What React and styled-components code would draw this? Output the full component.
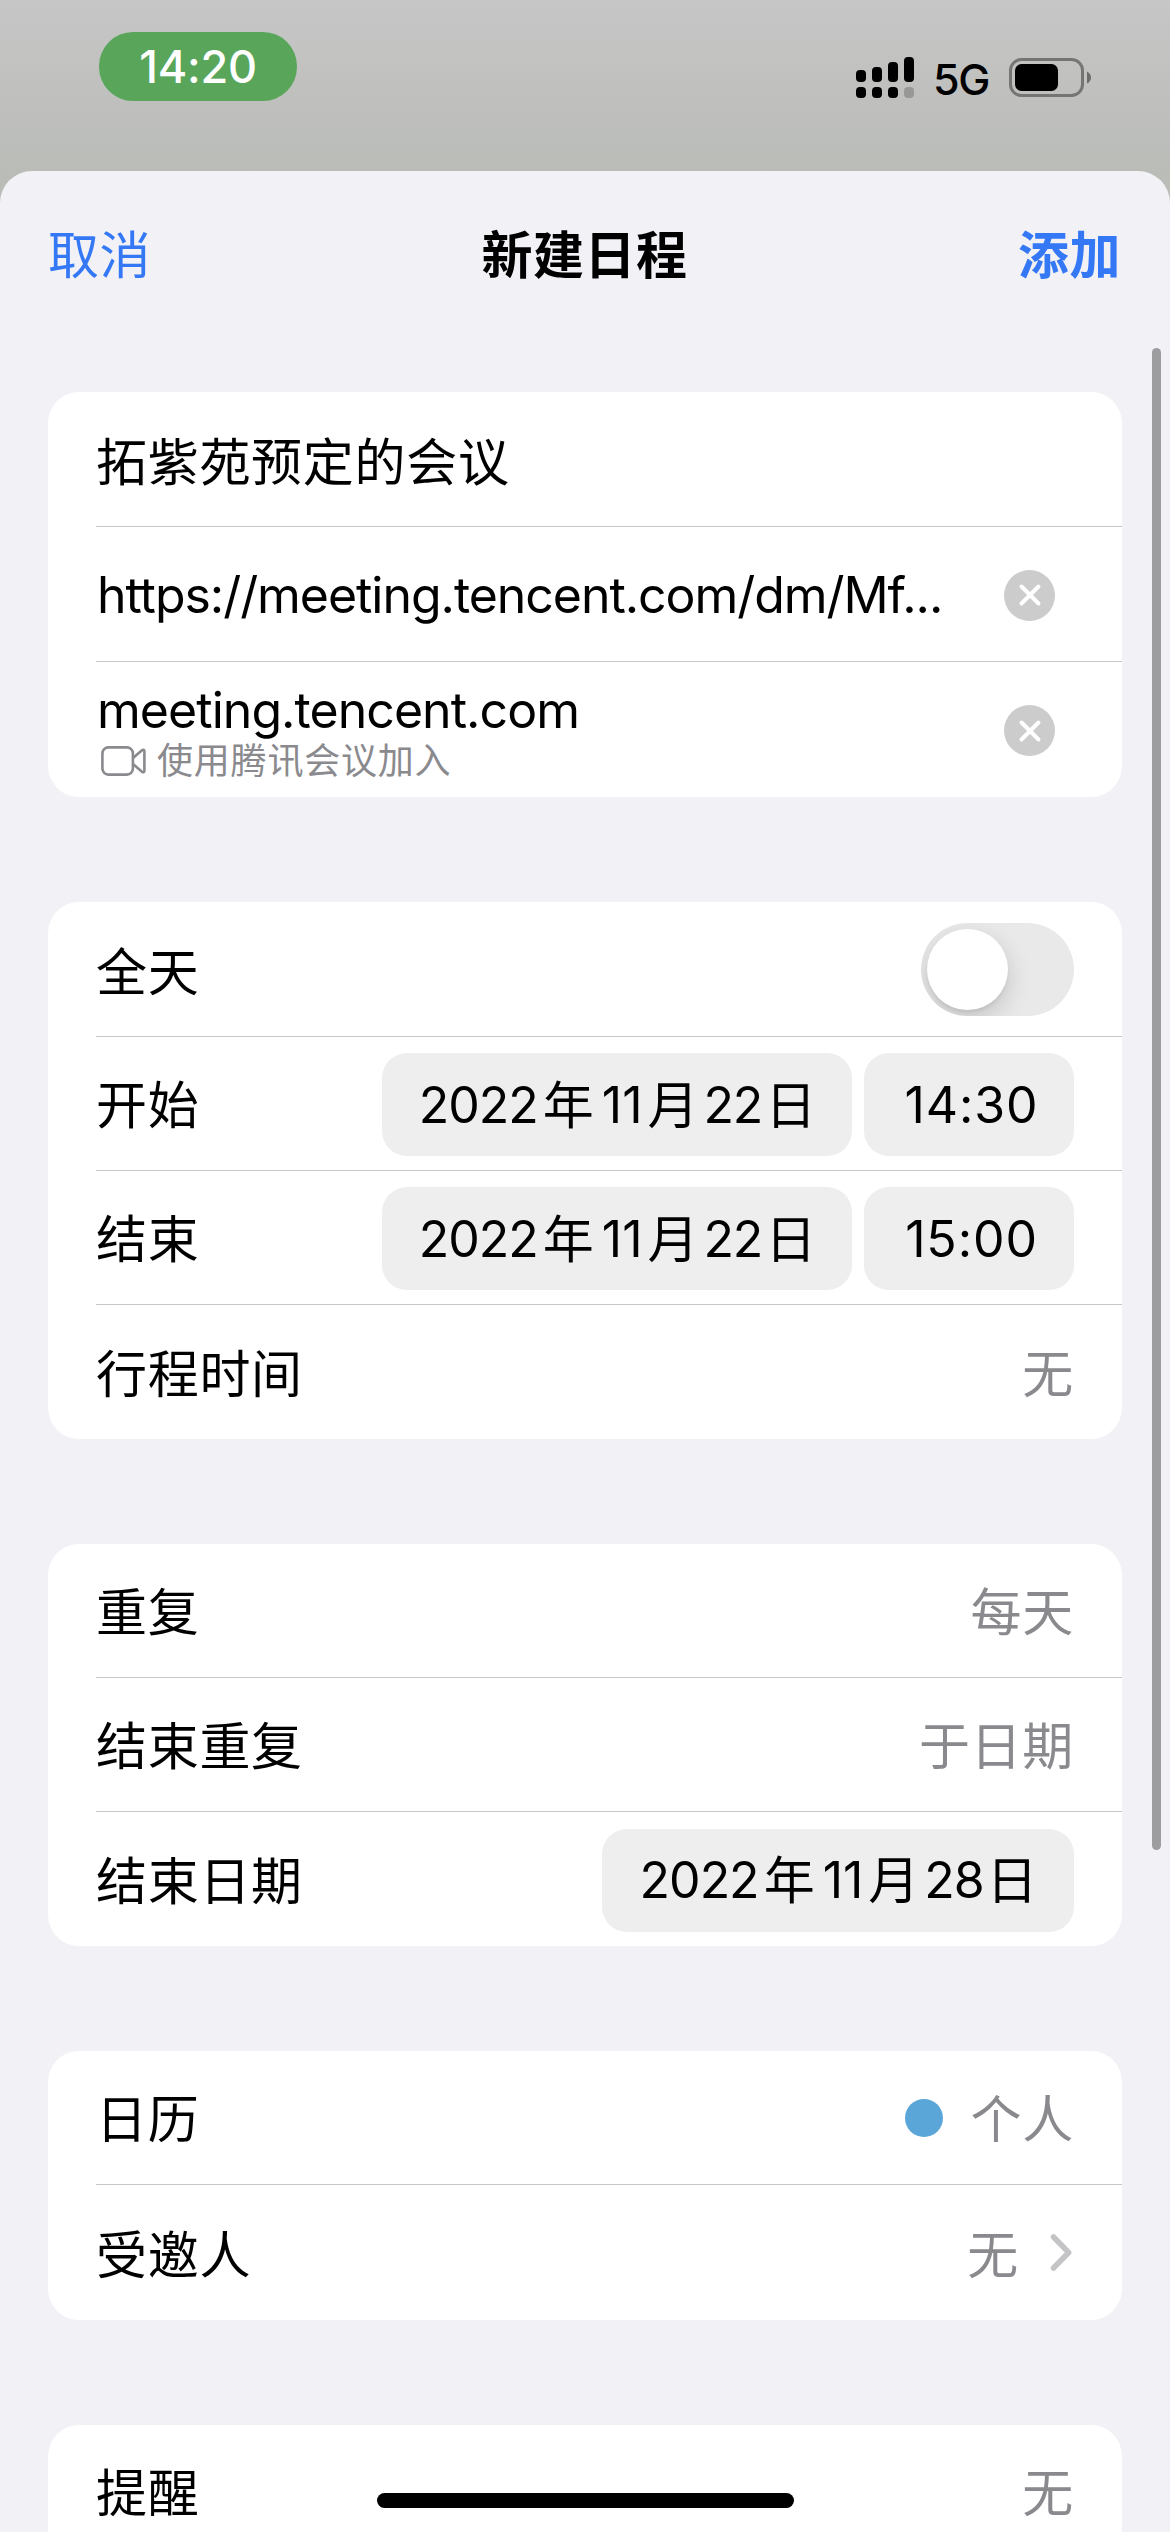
import React from "react";
import styled, { createGlobalStyle } from "styled-components";

const GlobalStyle = createGlobalStyle`
  * { box-sizing: border-box; }
  html, body { margin: 0; padding: 0; }
  body {
    width: 1170px;
    height: 2532px;
    overflow: hidden;
    font-family: Inter, "Noto Sans CJK SC", sans-serif;
    font-size: 51px;
    color: #000;
  }
`;

const Screen = styled.div`
  position: relative;
  display: flex;
  flex-direction: column;
  width: 1170px;
  height: 2532px;
  overflow: hidden;
  background: linear-gradient(#c6c6c6 0, #babcb8 171px, #b9bbb7 100%);
`;

const StatusBar = styled.div`
  display: flex;
  align-items: flex-start;
  justify-content: space-between;
  height: 171px;
  flex: none;
  padding: 32px 78px 0 99px;
`;

const TimePill = styled.div`
  display: flex;
  align-items: center;
  justify-content: center;
  width: 198px;
  height: 69px;
  border-radius: 34px;
  background: #59a65b;
  color: #fff;
  font-size: 45px;
  font-weight: 450;
  letter-spacing: -0.2px;
`;

const StatusIcons = styled.div`
  display: flex;
  align-items: flex-start;
  height: 69px;
`;

const Network = styled.span`
  margin: 21px 20px 0 19px;
  width: 56px;
  font-size: 43px;
  font-weight: 450;
  line-height: 52px;
  letter-spacing: -1.3px;
  white-space: nowrap;
`;

const SignalIcon = styled.svg`
  width: 58px;
  height: 42px;
  margin-top: 25px;
`;

const BatteryIcon = styled.svg`
  width: 83px;
  height: 40px;
  margin-top: 26px;
`;

const Sheet = styled.main`
  display: flex;
  flex-direction: column;
  flex: 1;
  border-radius: 32px 32px 0 0;
  background: #f1f1f6;
`;

const NavBar = styled.header`
  display: grid;
  grid-template-columns: 1fr auto 1fr;
  align-items: center;
  height: 162px;
  margin-bottom: 59px;
  padding: 0 49px 0 48px;
  letter-spacing: 0.5px;
`;

const NavButton = styled.button`
  justify-self: ${(p) => (p.$end ? "end" : "start")};
  padding: 0;
  border: 0;
  background: none;
  font: inherit;
  letter-spacing: inherit;
  font-weight: ${(p) => (p.$end ? 600 : 400)};
  color: #3478f6;
`;

const Title = styled.h1`
  margin: 0;
  font-size: 51px;
  font-weight: 600;
`;

const Groups = styled.div`
  display: flex;
  flex-direction: column;
  gap: 105px;
  padding: 0 48px;
`;

const Card = styled.section`
  border-radius: 31px;
  background: #fff;
  padding-left: 48px;
`;

const Row = styled.div`
  display: flex;
  align-items: center;
  justify-content: space-between;
  height: ${(p) => p.$h || 134}px;
  padding-right: ${(p) => p.$pr || 48}px;
  border-bottom: ${(p) => (p.$last ? "0" : "1px solid #c6c6c8")};
`;

const Label = styled.span`
  padding-top: ${(p) => p.$drop ?? 5}px;
  line-height: 74px;
  letter-spacing: 0.7px;
  white-space: nowrap;
`;

const Value = styled(Label)`
  color: #8a8a8e;
`;

const Url = styled.span`
  margin-left: 1px;
  padding-top: 2px;
  font-size: 50px;
  line-height: 60px;
  letter-spacing: ${(p) => p.$track}px;
  white-space: nowrap;
`;

const Location = styled.div`
  display: flex;
  flex-direction: column;
`;

const JoinHint = styled.div`
  display: flex;
  align-items: center;
  gap: 11px;
  height: 42px;
  padding-left: 5px;
  color: #8a8a8e;
  font-size: 36px;
  letter-spacing: 0.8px;
  line-height: 42px;
`;

const ClearButton = styled.button`
  display: flex;
  align-items: center;
  justify-content: center;
  width: 51px;
  height: 51px;
  margin-top: 2px;
  padding: 0;
  border: 0;
  border-radius: 50%;
  background: #ccc;
`;

const Trailing = styled.div`
  display: flex;
  align-items: center;
  gap: ${(p) => p.$gap}px;
`;

const Switch = styled.div`
  display: flex;
  align-items: center;
  width: 153px;
  height: 93px;
  padding: 0 6px;
  border-radius: 47px;
  background: #e9e9ea;
  overflow: hidden;
`;

const Knob = styled.div`
  width: 81px;
  height: 81px;
  border-radius: 50%;
  background: #fff;
  box-shadow: 0 9px 24px rgba(0, 0, 0, 0.17), 0 3px 3px rgba(0, 0, 0, 0.05);
`;

const Chip = styled.div`
  display: flex;
  align-items: center;
  justify-content: center;
  width: ${(p) => p.$w}px;
  height: 103px;
  margin-top: 2px;
  padding-left: ${(p) => p.$shift ?? 1}px;
  border-radius: 25px;
  background: #eeeeee;
  font-size: 50px;
  white-space: nowrap;
`;

const Digits = styled.span`
  line-height: 74px;
  letter-spacing: ${(p) => p.$track ?? 0}px;
`;

const Unit = styled.span`
  margin: 0 ${(p) => p.$after ?? 0}px 0 ${(p) => p.$before ?? 0}px;
  padding-bottom: 6px;
  font-family: "Noto Sans CJK SC", sans-serif;
  font-size: 51px;
  line-height: 74px;
`;

const Dot = styled.span`
  width: 38px;
  height: 38px;
  border-radius: 50%;
  background: #5aa6d8;
`;

const ScrollThumb = styled.div`
  position: absolute;
  top: 348px;
  right: 9px;
  width: 9px;
  height: 1502px;
  border-radius: 5px;
  background: #9d9d9f;
`;

const HomeIndicator = styled.div`
  position: absolute;
  left: 377px;
  bottom: 24px;
  width: 417px;
  height: 15px;
  border-radius: 8px;
  background: #000;
`;

function Signal() {
  const tops = [13, 10, 5, 0];
  return (
    <SignalIcon viewBox="0 0 58 42">
      {tops.map((top, i) => (
        <g key={top}>
          <rect x={i * 16} y={top} width="10" height={25 - top} rx="4" />
          <rect x={i * 16} y="30" width="10" height="11" rx="4" fill={i === 3 ? "#989997" : "#000"} />
        </g>
      ))}
    </SignalIcon>
  );
}

function Battery() {
  return (
    <BatteryIcon viewBox="0 0 83 40">
      <rect x="1.5" y="1.5" width="72" height="36" rx="11" fill="none" stroke="#757674" strokeWidth="3" />
      <rect x="6" y="6" width="43" height="27" rx="6.5" />
      <path d="M78 13.5 Q82 15.5 82 19.5 Q82 23.5 78 25.5 Z" fill="#6c6d6b" />
    </BatteryIcon>
  );
}

function Clear() {
  return (
    <ClearButton aria-label="清除">
      <svg width="24" height="24" viewBox="0 0 24 24">
        <path d="M3.5 3.5 L20.5 20.5 M20.5 3.5 L3.5 20.5" stroke="#fff" strokeWidth="4" strokeLinecap="round" />
      </svg>
    </ClearButton>
  );
}

function DateChip({ day, width }) {
  return (
    <Chip $w={width}>
      <Digits $track={-1}>2022</Digits>
      <Unit $before={5} $after={8}>年</Unit>
      <Digits>11</Digits>
      <Unit $before={5} $after={5}>月</Unit>
      <Digits $track={-1.2}>{day}</Digits>
      <Unit $before={3}>日</Unit>
    </Chip>
  );
}

export default function App() {
  return (
    <>
      <GlobalStyle />
      <Screen>
        <StatusBar>
          <TimePill>14:20</TimePill>
          <StatusIcons>
            <Signal />
            <Network>5G</Network>
            <Battery />
          </StatusIcons>
        </StatusBar>
        <Sheet>
          <NavBar>
            <NavButton>取消</NavButton>
            <Title>新建日程</Title>
            <NavButton $end>添加</NavButton>
          </NavBar>
          <Groups>
            <Card>
              <Row $h={135}>
                <Label $drop={8}>拓紫苑预定的会议</Label>
              </Row>
              <Row $h={135} $pr={67}>
                <Url $track={-1.05}>https://meeting.tencent.com/dm/Mf...</Url>
                <Clear />
              </Row>
              <Row $h={135} $pr={67} $last>
                <Location>
                  <Url $track={-0.95}>meeting.tencent.com</Url>
                  <JoinHint>
                    <svg width="45" height="30" viewBox="0 0 45 30" fill="none" stroke="#8a8a8e" strokeWidth="2.6" strokeLinejoin="round">
                      <rect x="1.4" y="1.4" width="30.5" height="27.2" rx="6" />
                      <path d="M32 12 L41 4.2 Q43.4 2.8 43.4 5.5 V24.5 Q43.4 27.2 41 25.8 L32 18" />
                    </svg>
                    <span>使用腾讯会议加入</span>
                  </JoinHint>
                </Location>
                <Clear />
              </Row>
            </Card>

            <Card>
              <Row $h={135}>
                <Label $drop={7}>全天</Label>
                <Switch>
                  <Knob />
                </Switch>
              </Row>
              <Row>
                <Label>开始</Label>
                <Trailing $gap={12}>
                  <DateChip day="22" width={470} />
                  <Chip $w={210} $shift={5}>
                    <Digits $track={0.9}>14:30</Digits>
                  </Chip>
                </Trailing>
              </Row>
              <Row>
                <Label>结束</Label>
                <Trailing $gap={12}>
                  <DateChip day="22" width={470} />
                  <Chip $w={210} $shift={5}>
                    <Digits $track={0.9}>15:00</Digits>
                  </Chip>
                </Trailing>
              </Row>
              <Row $last>
                <Label>行程时间</Label>
                <Value>无</Value>
              </Row>
            </Card>

            <Card>
              <Row>
                <Label>重复</Label>
                <Value>每天</Value>
              </Row>
              <Row>
                <Label>结束重复</Label>
                <Value>于日期</Value>
              </Row>
              <Row $last>
                <Label>结束日期</Label>
                <DateChip day="28" width={472} />
              </Row>
            </Card>

            <Card>
              <Row>
                <Label>日历</Label>
                <Trailing $gap={28}>
                  <Dot />
                  <Value>个人</Value>
                </Trailing>
              </Row>
              <Row $h={135} $last>
                <Label $drop={7}>受邀人</Label>
                <Trailing $gap={31}>
                  <Value $drop={7}>无</Value>
                  <svg width="24" height="37" viewBox="0 0 24 37" fill="none" stroke="#c4c4c6" strokeWidth="5.5" strokeLinecap="round" strokeLinejoin="round">
                    <path d="M3.5 3 L18.7 18.5 L3.5 34" />
                  </svg>
                </Trailing>
              </Row>
            </Card>

            <Card>
              <Row>
                <Label>提醒</Label>
                <Value>无</Value>
              </Row>
            </Card>
          </Groups>
        </Sheet>
        <ScrollThumb />
        <HomeIndicator />
      </Screen>
    </>
  );
}
